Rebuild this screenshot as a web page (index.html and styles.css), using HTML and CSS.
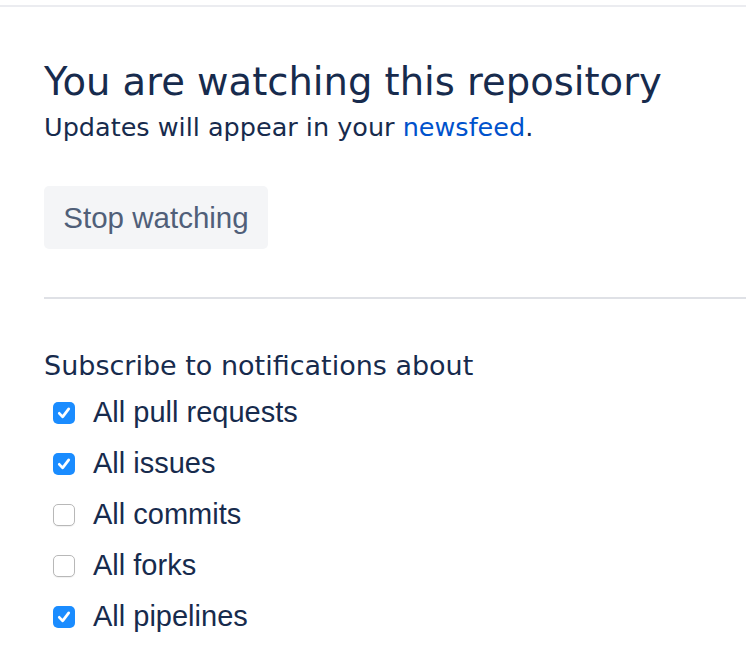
FILE: index.html
```html
<!DOCTYPE html>
<html lang="en">
<head>
    <meta charset="UTF-8">
    <meta name="viewport" content="width=device-width, initial-scale=1.0">
    <title>Watching</title>
    <link rel="stylesheet" href="styles.css">
</head>
<body>
    <div class="topbar"></div>

    <div class="content">
        <h1>You are watching this repository</h1>
        <p class="sub">Updates will appear in your <a href="#">newsfeed</a>.</p>

        <button class="btn">Stop watching</button>
    </div>

    <hr class="divider">

    <div class="content">
        <h2>Subscribe to notifications about</h2>

        <ul class="options">
            <li class="option">
                <span class="box checked"><svg viewBox="0 0 21 21" width="21" height="21"><path d="M6 10.8 L9.2 14.2 L15 6.6" fill="none" stroke="#fff" stroke-width="2.6" stroke-linecap="round" stroke-linejoin="round"/></svg></span>
                <span class="label">All pull requests</span>
            </li>
            <li class="option">
                <span class="box checked"><svg viewBox="0 0 21 21" width="21" height="21"><path d="M6 10.8 L9.2 14.2 L15 6.6" fill="none" stroke="#fff" stroke-width="2.6" stroke-linecap="round" stroke-linejoin="round"/></svg></span>
                <span class="label">All issues</span>
            </li>
            <li class="option">
                <span class="box"></span>
                <span class="label">All commits</span>
            </li>
            <li class="option">
                <span class="box"></span>
                <span class="label">All forks</span>
            </li>
            <li class="option">
                <span class="box checked"><svg viewBox="0 0 21 21" width="21" height="21"><path d="M6 10.8 L9.2 14.2 L15 6.6" fill="none" stroke="#fff" stroke-width="2.6" stroke-linecap="round" stroke-linejoin="round"/></svg></span>
                <span class="label">All pipelines</span>
            </li>
        </ul>
    </div>
</body>
</html>
```
FILE: styles.css
```css
body {
    margin: 0;
    padding: 0;
    background-color: #fff;
    color: #172b4d;
    font-family: "DejaVu Sans", Verdana, sans-serif;
}
.topbar {
    height: 5px;
    border-bottom: 2px solid #ebecf0;
}
.content {
    padding-left: 44px;
}
h1 {
    margin: 53px 0 0;
    font-size: 38.5px;
    line-height: 44px;
    font-weight: normal;
}
.sub {
    margin: 8px 0 0;
    font-size: 25.5px;
    line-height: 30px;
}
.sub a {
    color: #0052cc;
    text-decoration: none;
}
.btn {
    display: block;
    margin-top: 44px;
    width: 224px;
    height: 63px;
    padding: 0;
    border: none;
    border-radius: 5px;
    background-color: #f4f5f7;
    color: #505f79;
    font-family: "Liberation Sans", Arial, sans-serif;
    font-size: 29.5px;
}
.divider {
    margin: 48px 0 0 44px;
    height: 2px;
    border: none;
    background-color: #dfe1e6;
}
h2 {
    margin: 51px 0 0;
    font-size: 27px;
    line-height: 32px;
    font-weight: normal;
}
.options {
    list-style: none;
    margin: 5px 0 0;
    padding: 0 0 0 9px;
}
.option {
    display: flex;
    align-items: center;
    gap: 18px;
    height: 51px;
    font-family: "Liberation Sans", Arial, sans-serif;
    font-size: 29px;
}
.box {
    width: 22px;
    height: 22px;
    box-sizing: border-box;
    border: 1px solid #b8b8b8;
    border-radius: 5px;
    background-color: #fff;
    box-shadow: 0 1px 1px rgba(0, 0, 0, 0.06);
}
.box.checked {
    border: none;
    background-color: #1a8cff;
    box-shadow: none;
}
.box svg {
    display: block;
    width: 22px;
    height: 22px;
}
```
